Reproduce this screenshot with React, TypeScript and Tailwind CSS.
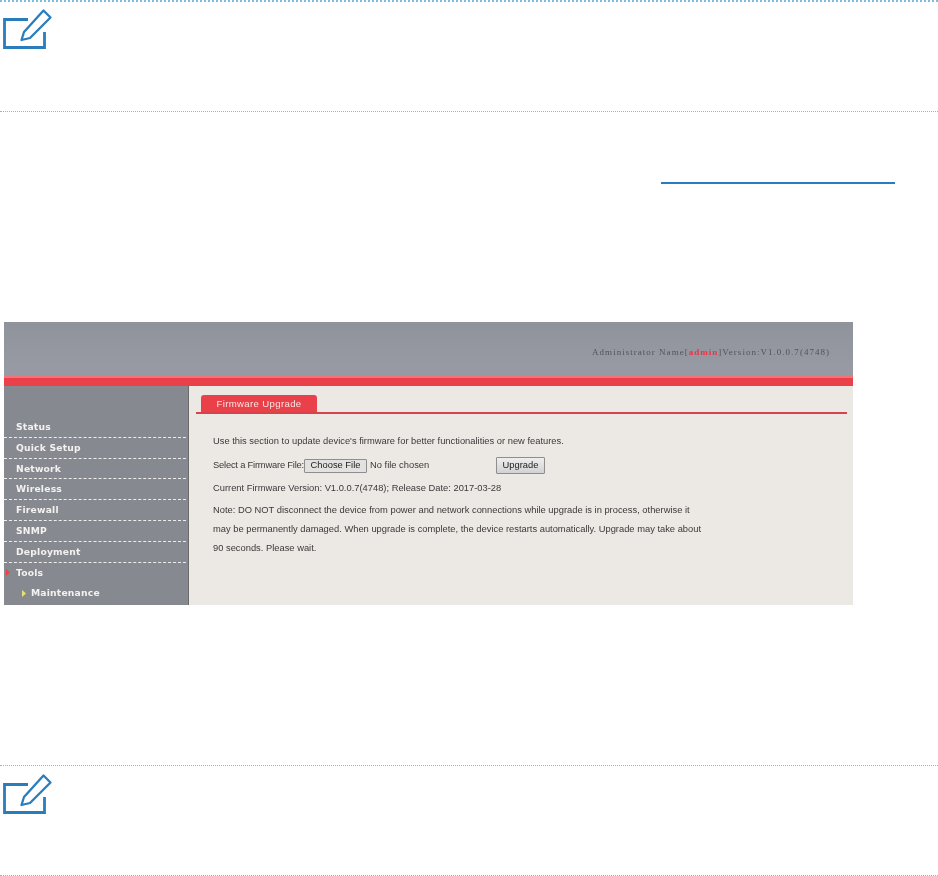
const bodyFont = "font-['Liberation_Sans',Arial,sans-serif]";

function NoteIcon() {
  return (
    <svg width="54" height="50" viewBox="0 2 54 50" fill="none" stroke="#2a7dbd" className="block">
      <path d="M28 19.5H4.5V47.5H44.5V32" strokeWidth="2.8" />
      <path d="M21.5 40 L24 32 L43.5 10.5 L50.5 17.5 L30 38 Z" strokeWidth="2.3" strokeLinejoin="round" />
    </svg>
  );
}

const menu = ["Status", "Quick Setup", "Network", "Wireless", "Firewall", "SNMP", "Deployment"];

function Shot() {
  return (
    <div className={`ml-[4px] w-[849px] h-[283px] flex flex-col bg-[#ece8e4] overflow-hidden blur-[0.35px] ${bodyFont}`}>
      <div className="h-[53px] shrink-0 bg-gradient-to-b from-[#8f939b] to-[#989ba3] flex items-center justify-end pr-[23px] pt-[8px]">
        <span className="font-['Liberation_Serif',serif] text-[9px] tracking-[1.02px] text-[#50545a] whitespace-nowrap">
          Administrator Name[<span className="text-[#ee3344] font-bold">admin</span>]Version:V1.0.0.7(4748)
        </span>
      </div>
      <div className="h-[3px] shrink-0 bg-[#f0747c]" />
      <div className="h-[8px] shrink-0 bg-[#ea404a]" />
      <div className="flex flex-1 min-h-0">
        <div className="w-[185px] shrink-0 bg-[#86898f] border-r border-[#6a6a6a] pt-[31px] pr-[2px] font-['DejaVu_Sans',sans-serif] font-bold text-[9.2px] text-[#f4f2f0] tracking-[0.2px]">
          {menu.map((m) => (
            <div key={m} className="h-[20.8px] pl-[12px] flex items-center border-b border-dashed border-[#f0eeec]">
              {m}
            </div>
          ))}
          <div className="h-[20.8px] pl-[2px] flex items-center gap-[6px]">
            <svg width="4" height="7" viewBox="0 0 4 7"><path d="M0 0L4 3.5L0 7Z" fill="#f0404a" /></svg>
            Tools
          </div>
          <div className="h-[20px] pl-[18px] flex items-center gap-[5px]">
            <svg width="4" height="7" viewBox="0 0 4 7"><path d="M0 0L4 3.5L0 7Z" fill="#e8e070" /></svg>
            Maintenance
          </div>
        </div>
        <div className="flex-1 min-w-0 pt-[9px] pl-[7px] pr-[6px] text-[#3a3a3a] text-[9.35px] leading-none">
          <div className="h-[19px] border-b-2 border-[#d8424a] pl-[5px]">
            <div className="w-[116px] h-[17px] bg-[#ea404a] rounded-t-[3px] text-[#f6e4e2] flex items-center justify-center text-[9.6px] tracking-[0.35px]">
              Firmware Upgrade
            </div>
          </div>
          <div className="pl-[17px] pt-[22px]">
            <div className="h-[12px] flex items-center whitespace-nowrap">
              Use this section to update device's firmware for better functionalities or new features.
            </div>
            <div className="h-[17px] mt-[9px] flex items-center whitespace-nowrap">
              <span className="w-[91px] tracking-[-0.2px]">Select a Firmware File:</span>
              <span className="w-[63px] h-[14px] flex items-center justify-center bg-[#e4e2e0] border border-[#8e8e8e] rounded-[1px] text-[#222]">Choose File</span>
              <span className="ml-[3px] w-[126px]">No file chosen</span>
              <span className="w-[49px] h-[17px] flex items-center justify-center bg-gradient-to-b from-[#eeeeee] to-[#d2d2d4] border border-[#8e8e90] rounded-[1px] text-[#222]">Upgrade</span>
            </div>
            <div className="h-[12px] mt-[9px] flex items-center whitespace-nowrap">
              Current Firmware Version: V1.0.0.7(4748); Release Date: 2017-03-28
            </div>
            <div className="mt-[6px] w-[500px] leading-[19px]">
              <div className="whitespace-nowrap">Note: DO NOT disconnect the device from power and network connections while upgrade is in process, otherwise it</div>
              <div className="whitespace-nowrap">may be permanently damaged. When upgrade is complete, the device restarts automatically. Upgrade may take about</div>
              <div className="whitespace-nowrap">90 seconds. Please wait.</div>
            </div>
          </div>
        </div>
      </div>
    </div>
  );
}

export default function App() {
  return (
    <div className="w-[938px] h-[876px] bg-white overflow-hidden">
      <div className="h-[112px] border-t-2 border-b border-dotted border-t-[#7fbbdc] border-b-[#9db4c0]">
        <NoteIcon />
      </div>
      <div className="h-[72px] pl-[661px] flex items-end">
        <div className="w-[234px] h-[2px] bg-[#2a7dbd]" />
      </div>
      <div className="h-[138px]" />
      <Shot />
      <div className="h-[160px]" />
      <div className="h-[111px] border-t border-b border-dotted border-[#9db4c0]">
        <div className="pt-[1px]">
          <NoteIcon />
        </div>
      </div>
    </div>
  );
}
